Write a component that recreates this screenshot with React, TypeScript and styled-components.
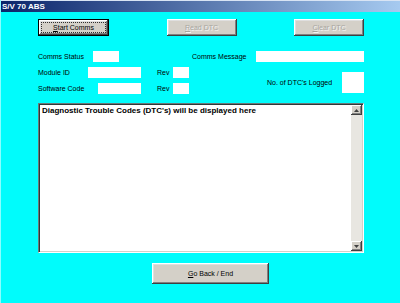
import React from 'react';
import styled, { createGlobalStyle, css } from 'styled-components';

const GlobalStyle = createGlobalStyle`
  html, body {
    margin: 0;
    padding: 0;
  }
  body {
    width: 400px;
    height: 303px;
    overflow: hidden;
    background: #00fcfc;
    font-family: "Liberation Sans", Arial, sans-serif;
  }
`;

const Window = styled.div`
  width: 400px;
  height: 303px;
  display: flex;
  flex-direction: column;
  background: #00fcfc;
  border-left: 1px solid #8afefe;
  box-sizing: border-box;
`;

const TitleBar = styled.div`
  height: 12px;
  flex-shrink: 0;
  display: flex;
  align-items: center;
  padding-left: 1px;
  background: linear-gradient(to right, #0a246a, #a6caf0);
  border-top: 1px solid #d8e4f4;
  box-sizing: border-box;
  color: #ffffff;
  font-weight: bold;
  font-size: 8px;
`;

const Content = styled.div`
  flex: 1;
  display: flex;
  flex-direction: column;
  padding: 7px 36px 0 37px;
`;

const ButtonRow = styled.div`
  display: flex;
  justify-content: space-between;
  height: 17px;
`;

const WinButton = styled.button<{ $w: number; $h?: number; $default?: boolean }>`
  width: ${p => p.$w}px;
  height: ${p => p.$h ?? 17}px;
  padding: 0;
  margin: 0;
  display: flex;
  align-items: center;
  justify-content: center;
  background: #d4d0c8;
  border: none;
  box-shadow: inset -1px -1px #404040, inset 1px 1px #ffffff,
    inset -2px -2px #808080, inset 2px 2px #dfdfdf;
  font-family: "Liberation Sans", Arial, sans-serif;
  font-size: 7px;
  color: #000000;
  cursor: default;

  &:disabled {
    color: #a8a6a0;
    text-shadow: 1px 1px 0 #f4f4f4;
  }

  ${p =>
    p.$default &&
    css`
      border: 1px solid #000000;
    `}
`;

const FocusRect = styled.span`
  border: 1px dotted #303030;
  padding: 1px 11px;
`;

const Key = styled.span`
  text-decoration: underline;
`;

const Fields = styled.div`
  display: flex;
  margin-top: 15px;
`;

const LeftColumn = styled.div`
  width: 155px;
  display: flex;
  flex-direction: column;
  gap: 5px;
`;

const RightColumn = styled.div`
  flex: 1;
  display: flex;
  flex-direction: column;
`;

const FieldRow = styled.div<{ $gapTop?: number }>`
  display: flex;
  align-items: center;
  margin-top: ${p => p.$gapTop ?? 0}px;
`;

const Label = styled.span<{ $w: number; $indent?: number }>`
  width: ${p => p.$w}px;
  margin-left: ${p => p.$indent ?? 0}px;
  flex-shrink: 0;
  font-size: 7px;
  color: #000000;
  white-space: nowrap;
`;

const Field = styled.div<{ $w: number; $h?: number }>`
  width: ${p => p.$w}px;
  height: ${p => p.$h ?? 11}px;
  flex-shrink: 0;
  background: #ffffff;
`;

const TextPanel = styled.div`
  margin-top: 9px;
  height: 150px;
  display: flex;
  background: #ffffff;
  border: 1px solid;
  border-color: #6a7878 #ffffff #ffffff #6a7878;
  box-shadow: inset 1px 1px #303838, inset -1px -1px #d4d0c8;
  box-sizing: border-box;
  padding: 1px 1px 1px 1px;
`;

const TextBody = styled.div`
  flex: 1;
  padding: 1px 1px 0 2px;
  font-size: 8px;
  line-height: 9px;
  font-weight: bold;
  color: #000000;
`;

const ScrollBar = styled.div`
  width: 11px;
  display: flex;
  flex-direction: column;
  background: #ebe9e4;
`;

const ScrollTrack = styled.div`
  flex: 1;
  background: #e8e6e1;
`;

const ArrowButton = styled.div`
  height: 10px;
  display: flex;
  align-items: center;
  justify-content: center;
  background: #d4d0c8;
  box-shadow: inset -1px -1px #404040, inset 1px 1px #ffffff,
    inset -2px -2px #808080;
`;

const Footer = styled.div`
  margin-top: 10px;
  padding-left: 114px;
  display: flex;
`;

const Arrow = ({ up }: { up?: boolean }) => (
  <svg width="5" height="3" viewBox="0 0 5 3">
    <polygon points={up ? '0,3 5,3 2.5,0' : '0,0 5,0 2.5,3'} fill="#404040" />
  </svg>
);

export default function App() {
  return (
    <>
      <GlobalStyle />
      <Window>
        <TitleBar>S/V 70 ABS</TitleBar>
        <Content>
          <ButtonRow>
            <WinButton $w={71} $default>
              <FocusRect>
                <Key>S</Key>tart Comms
              </FocusRect>
            </WinButton>
            <WinButton $w={70} disabled>
              <Key>R</Key>ead DTC
            </WinButton>
            <WinButton $w={70} disabled>
              <Key>C</Key>lear DTC
            </WinButton>
          </ButtonRow>

          <Fields>
            <LeftColumn>
              <FieldRow>
                <Label $w={55}>Comms Status</Label>
                <Field $w={26} />
              </FieldRow>
              <FieldRow>
                <Label $w={50}>Module ID</Label>
                <Field $w={53} />
                <Label $w={16} $indent={16}>Rev</Label>
                <Field $w={16} />
              </FieldRow>
              <FieldRow>
                <Label $w={60}>Software Code</Label>
                <Field $w={43} />
                <Label $w={16} $indent={16}>Rev</Label>
                <Field $w={16} />
              </FieldRow>
            </LeftColumn>
            <RightColumn>
              <FieldRow>
                <Label $w={64}>Comms Message</Label>
                <Field $w={108} />
              </FieldRow>
              <FieldRow $gapTop={10}>
                <Label $w={75} $indent={75}>No. of DTC's Logged</Label>
                <Field $w={22} $h={21} />
              </FieldRow>
            </RightColumn>
          </Fields>

          <TextPanel>
            <TextBody>Diagnostic Trouble Codes (DTC's) will be displayed here</TextBody>
            <ScrollBar>
              <ArrowButton>
                <Arrow up />
              </ArrowButton>
              <ScrollTrack />
              <ArrowButton>
                <Arrow />
              </ArrowButton>
            </ScrollBar>
          </TextPanel>

          <Footer>
            <WinButton $w={117} $h={21}>
              <span>
                <Key>G</Key>o Back / End
              </span>
            </WinButton>
          </Footer>
        </Content>
      </Window>
    </>
  );
}
